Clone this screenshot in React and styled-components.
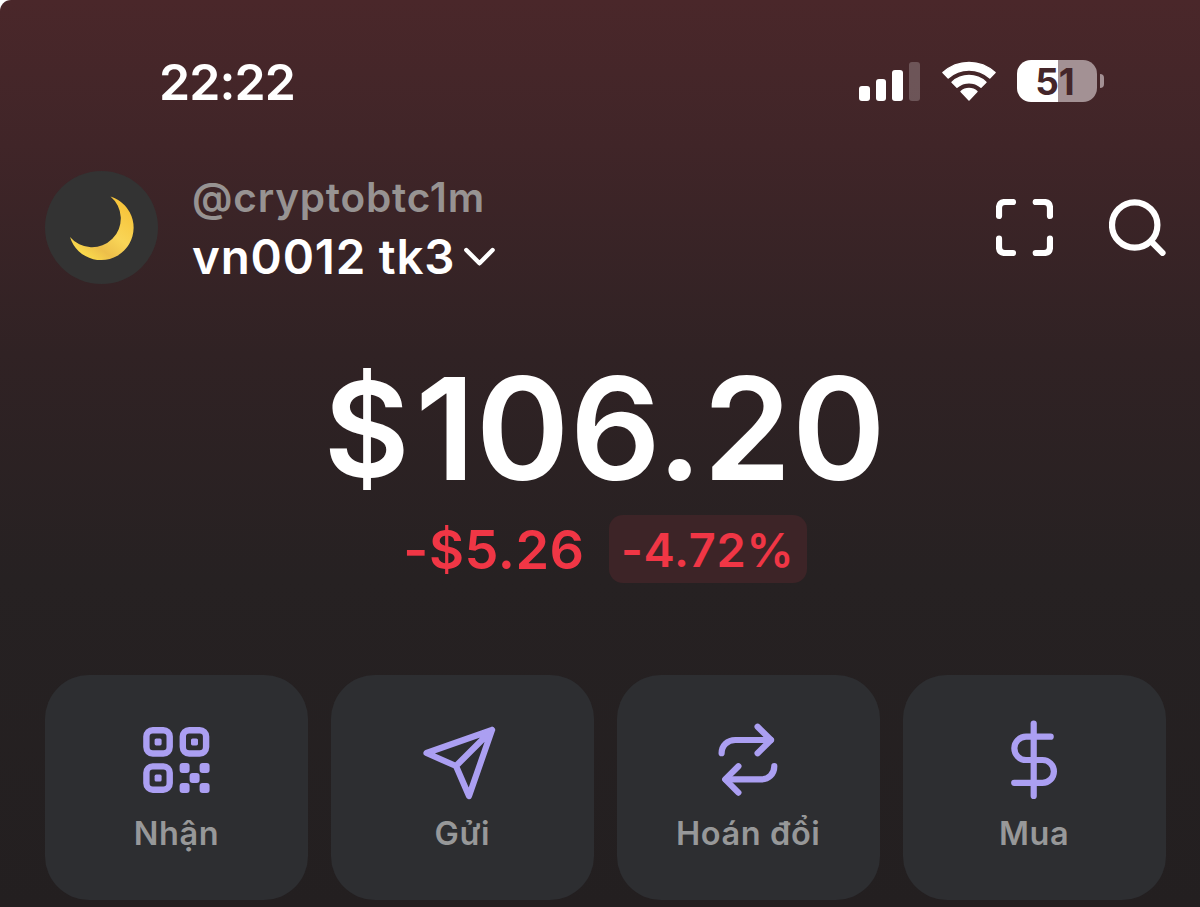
import React from 'react'
import styled, {createGlobalStyle} from 'styled-components'

const GlobalStyle = createGlobalStyle`
    * {
        box-sizing: border-box;
    }

    body {
        margin: 0;
        background: #fff;
        font-family: Inter, "Liberation Sans", sans-serif;
    }
`

const Screen = styled.main`
    width: 1200px;
    height: 907px;
    overflow: hidden;
    border-top-left-radius: 11px;
    background: linear-gradient(180deg, #4a272a 0%, #402528 16%, #302224 39%, #262122 64%, #231f20 100%);
    color: #fff;
`

const StatusBar = styled.div`
    height: 164px;
    padding: 0 96px 0 159px;
    display: flex;
    align-items: center;
    justify-content: space-between;
`

const Clock = styled.span`
    font-size: 50px;
    font-weight: 600;
    letter-spacing: -0.9px;
`

const StatusIcons = styled.div`
    margin-bottom: 2px;
    display: flex;
    align-items: center;
    gap: 21.5px;
`

const Signal = styled.div`
    height: 39px;
    display: flex;
    align-items: flex-end;
    gap: 6px;
`

const SignalBar = styled.span`
    width: 10.8px;
    height: ${props => props.$height}px;
    border-radius: 3px;
    background: ${props => props.$off ? "rgba(255, 255, 255, 0.22)" : "#fff"};
`

const Battery = styled.div`
    display: flex;
    align-items: center;
    gap: 3px;
`

const BatteryBody = styled.div`
    width: 80px;
    height: 42px;
    padding-right: 4px;
    border-radius: 14px;
    background: linear-gradient(90deg, #fff 51%, #a39194 51%);
    color: #44262a;
    font-size: 37px;
    font-weight: 700;
    line-height: 43px;
    text-align: center;
`

const BatteryTip = styled.span`
    width: 4px;
    height: 14px;
    border-radius: 0 5px 5px 0;
    background: #a39194;
`

const Header = styled.header`
    height: 113px;
    margin-top: 7px;
    padding: 0 34px 0 45px;
    display: flex;
    align-items: center;
`

const Avatar = styled.div`
    width: 113px;
    height: 113px;
    border-radius: 50%;
    background: #333;
`

const Account = styled.div`
    flex: 1;
    margin-left: 34px;
    margin-bottom: 1px;
    display: flex;
    flex-direction: column;
`

const Handle = styled.span`
    color: #979392;
    font-size: 40.5px;
    font-weight: 600;
    line-height: 60px;
    letter-spacing: 0.8px;
`

const AccountName = styled.span`
    display: flex;
    align-items: center;
    gap: 9px;
    font-size: 47.5px;
    font-weight: 600;
    line-height: 58px;
    letter-spacing: 0.8px;
`

const HeaderIcons = styled.div`
    display: flex;
    gap: 56px;
`

const LineIcon = styled.svg`
    display: block;
    fill: none;
    stroke: currentColor;
    stroke-width: ${props => props.$stroke || 6.2};
    stroke-linecap: round;
    stroke-linejoin: round;
`

const Balance = styled.section`
    margin-top: 73px;
    padding-left: 10px;
    display: flex;
    flex-direction: column;
    align-items: center;
`

const Amount = styled.h1`
    height: 143px;
    margin: 0;
    font-size: 142px;
    font-weight: 600;
    line-height: 143px;
    letter-spacing: 0.6px;
`

const Currency = styled.span`
    margin-right: 5px;
    font-size: 132px;
    line-height: 1;
    vertical-align: 3px;
`

const Change = styled.div`
    margin-top: 15px;
    display: flex;
    align-items: center;
    gap: 24px;
    color: #f03645;
`

const ChangeValue = styled.span`
    font-size: 54px;
    font-weight: 600;
    letter-spacing: 0.5px;
`

const ChangePercent = styled.span`
    width: 198px;
    height: 68px;
    border-radius: 14px;
    background: #3d2427;
    font-size: 47px;
    font-weight: 600;
    line-height: 70px;
    letter-spacing: 0.7px;
    text-align: center;
`

const Actions = styled.nav`
    margin: 92px 34.5px 0 45px;
    display: grid;
    grid-template-columns: repeat(4, 1fr);
    gap: 23px;
`

const ActionButton = styled.button`
    height: 225px;
    padding: 45px 0 0;
    border: 0;
    border-radius: 44px;
    background: #2d2e31;
    color: #ab9ff2;
    font-family: inherit;
    display: flex;
    flex-direction: column;
    align-items: center;
    justify-content: flex-start;
`

const ActionLabel = styled.span`
    margin-top: 14px;
    color: #979899;
    font-size: 32.5px;
    font-weight: 600;
    line-height: 40px;
    letter-spacing: 0.6px;
`

const Moon = () => (
    <svg width="113" height="113" viewBox="0 0 113 113">
        <defs>
            <linearGradient id="moon" x1="0.9" y1="0.2" x2="0.3" y2="1">
                <stop offset="0" stopColor="#f7c53c" />
                <stop offset="0.45" stopColor="#f9d557" />
                <stop offset="0.75" stopColor="#edbf4a" />
                <stop offset="1" stopColor="#fbdc4c" />
            </linearGradient>
        </defs>
        <path d="M65.5 25.5A32.5 32.5 0 1 1 25 66A28.75 28.75 0 1 0 65.5 25.5Z" fill="url(#moon)" />
    </svg>
)

const Wifi = () => (
    <svg width="54" height="41" viewBox="0 0 54 41" fill="#fff" stroke="#fff" strokeWidth="1.4" strokeLinejoin="round">
        <path d="M0.9 11.6A38.4 38.4 0 0 1 53.1 11.6L47.8 17A31 31 0 0 0 6.2 17Z" />
        <path d="M10 21.2A25 25 0 0 1 44 21.2L39 26.3A18.5 18.5 0 0 0 15 26.3Z" />
        <path d="M19 30.6A12 12 0 0 1 35 30.6L27 39Z" />
    </svg>
)

const Chevron = () => (
    <LineIcon width="31" height="20" viewBox="0 0 31 20" $stroke={4.4}>
        <path d="M2.3 3L15.5 16.3L28.6 3" />
    </LineIcon>
)

const ScanIcon = () => (
    <LineIcon width="57" height="57" viewBox="0 0 57 57">
        <path d="M3 17V9Q3 3 9 3H17M39.7 3H48Q54 3 54 9V17M54 39.7V48Q54 54 48 54H39.7M17 54H9Q3 54 3 48V39.7" />
    </LineIcon>
)

const SearchIcon = () => (
    <LineIcon width="57" height="57" viewBox="0 0 57 57">
        <circle cx="25.7" cy="26" r="22.7" />
        <path d="M42 42.3L53.5 53.9" />
    </LineIcon>
)

const QrIcon = () => (
    <svg width="80" height="80" viewBox="0 0 80 80" fill="currentColor">
        {[[7.2, 7], [43.6, 7], [7.2, 43.2]].map(([x, y]) => (
            <g key={`${x}-${y}`}>
                <rect x={x + 3.2} y={y + 3.2} width="23.3" height="23.3" rx="6.4" fill="none" stroke="currentColor" strokeWidth="6.4" />
                <rect x={x + 11.4} y={y + 11.4} width="7" height="7" rx="1.6" />
            </g>
        ))}
        {[[43.6, 43], [63.6, 43], [53.6, 53], [43.6, 63], [63.6, 63]].map(([x, y]) => (
            <rect key={`${x}-${y}`} x={x} y={y} width="10" height="10" rx="3" />
        ))}
    </svg>
)

const SendIcon = () => (
    <LineIcon width="80" height="80" viewBox="0 0 80 80">
        <path d="M4.5 33L70 10L47 76L34 46L4.5 33ZM34 46L70 10" />
    </LineIcon>
)

const SwapIcon = () => (
    <LineIcon width="80" height="80" viewBox="-0.8 0 80 80">
        <path d="M12.8 33.2C12.8 25.4 18.6 20 26.5 20H62" />
        <path d="M48.8 6.8L62.2 20L48.8 33.2" />
        <path d="M65.5 46.2C65.5 54 59.8 59.4 52 59.4H17" />
        <path d="M29.6 46.2L16.4 59.4L29.6 72.6" />
    </LineIcon>
)

const DollarIcon = () => (
    <LineIcon width="80" height="80" viewBox="0 0 80 80">
        <path d="M39.7 3.5V76" />
        <path d="M56.7 16.7H32A11.65 11.65 0 0 0 32 40H48.5A11.4 11.4 0 0 1 48.5 62.8H20.2" />
    </LineIcon>
)

const actions = [
    {label: "Nhận", Icon: QrIcon},
    {label: "Gửi", Icon: SendIcon},
    {label: "Hoán đổi", Icon: SwapIcon},
    {label: "Mua", Icon: DollarIcon},
]

const App = () => {
    return (
        <>
            <GlobalStyle />
            <Screen>
                <StatusBar>
                    <Clock>22:22</Clock>
                    <StatusIcons>
                        <Signal>
                            <SignalBar $height={15} />
                            <SignalBar $height={22} />
                            <SignalBar $height={31} />
                            <SignalBar $height={39} $off />
                        </Signal>
                        <Wifi />
                        <Battery>
                            <BatteryBody>51</BatteryBody>
                            <BatteryTip />
                        </Battery>
                    </StatusIcons>
                </StatusBar>
                <Header>
                    <Avatar>
                        <Moon />
                    </Avatar>
                    <Account>
                        <Handle>@cryptobtc1m</Handle>
                        <AccountName>
                            vn0012 tk3
                            <Chevron />
                        </AccountName>
                    </Account>
                    <HeaderIcons>
                        <ScanIcon />
                        <SearchIcon />
                    </HeaderIcons>
                </Header>
                <Balance>
                    <Amount><Currency>$</Currency>106.20</Amount>
                    <Change>
                        <ChangeValue>-$5.26</ChangeValue>
                        <ChangePercent>-4.72%</ChangePercent>
                    </Change>
                </Balance>
                <Actions>
                    {actions.map(({label, Icon}) => (
                        <ActionButton key={label}>
                            <Icon />
                            <ActionLabel>{label}</ActionLabel>
                        </ActionButton>
                    ))}
                </Actions>
            </Screen>
        </>
    )
}

export default App
